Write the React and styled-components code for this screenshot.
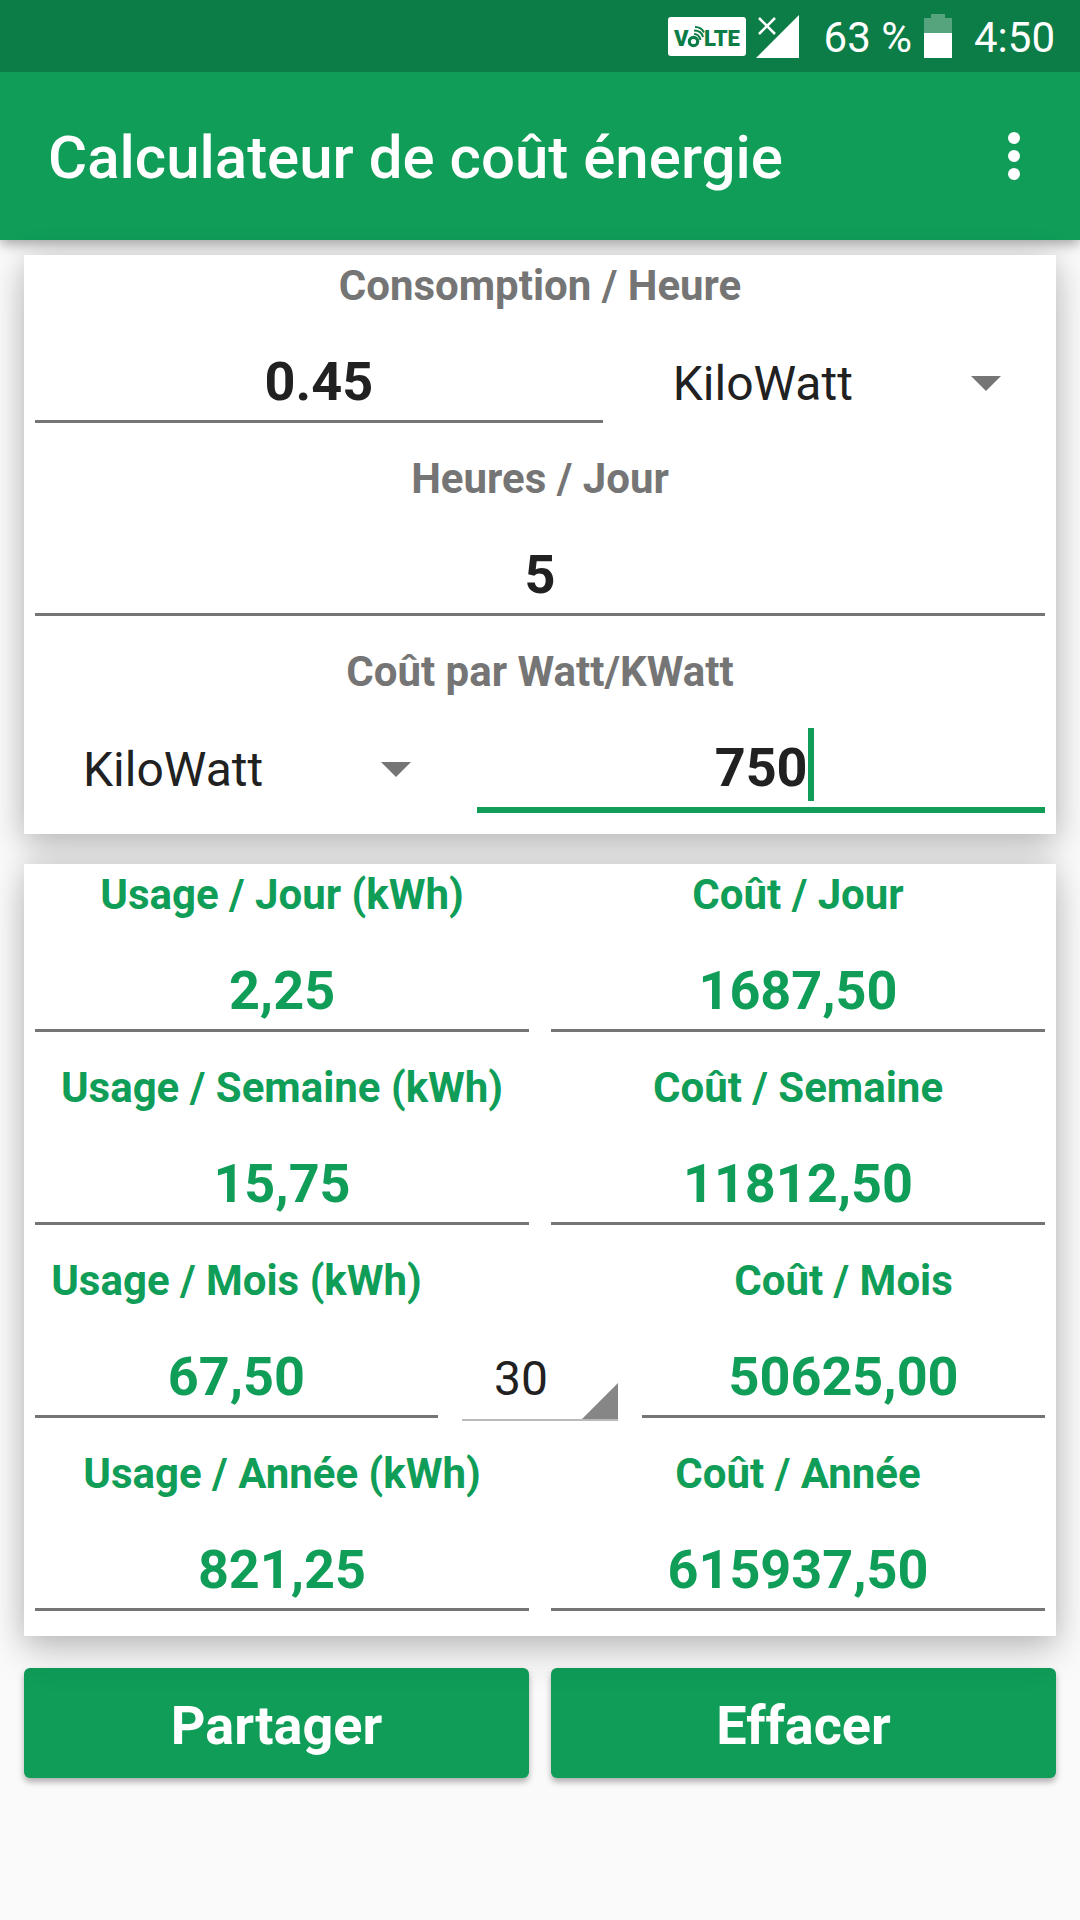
import React, { useState } from "react"
import styled, { createGlobalStyle } from "styled-components"

const Colors = {
  Green: "#0f9d58",
  DarkGreen: "#0c7d46",
  Grey: "#757575",
  Black: "#212121",
  Page: "#fafafa",
}

const format = n => n.toFixed(2).replace(".", ",")

const UnitSelect = ({ label, value, onChange }) => (
  <SelectWrap>
    <Select
      aria-label={label}
      value={value}
      onChange={e => onChange(e.target.value)}
    >
      <option>Watt</option>
      <option>KiloWatt</option>
    </Select>
    <Arrow viewBox="0 0 30 15" aria-hidden="true">
      <path d="M0 0h30L15 15z" />
    </Arrow>
  </SelectWrap>
)

const Result = ({ id, label, value }) => (
  <Cell>
    <Label htmlFor={id} $green>
      {label}
    </Label>
    <Input id={id} value={format(value)} readOnly $green />
  </Cell>
)

const App = () => {
  const [power, setPower] = useState("0.45")
  const [powerUnit, setPowerUnit] = useState("KiloWatt")
  const [hours, setHours] = useState("5")
  const [cost, setCost] = useState("750")
  const [costUnit, setCostUnit] = useState("KiloWatt")
  const [days, setDays] = useState("30")

  const kwh = (Number(power) * Number(hours)) / (powerUnit === "Watt" ? 1000 : 1)
  const price = kwh * Number(cost) * (costUnit === "Watt" ? 1000 : 1)

  const clear = () => {
    setPower("")
    setHours("")
    setCost("")
  }

  return (
    <>
      <GlobalStyle />
      <StatusBar>
        <Volte viewBox="0 0 78 39" role="img" aria-label="VoLTE">
          <rect width="78" height="39" rx="3" fill="#fff" />
          <g
            fill={Colors.DarkGreen}
            fontFamily="Roboto, sans-serif"
            fontSize="22"
            fontWeight="900"
          >
            <text x="6" y="29">V</text>
            <text x="36" y="29">LTE</text>
          </g>
          <g fill="none" stroke={Colors.DarkGreen}>
            <circle cx="25.500" cy="24.500" r="4.200" strokeWidth="3.200" />
            <path d="M26 17q5 0 6.500 6" strokeWidth="2" />
            <path d="M26 13.500q7.500 0 9 6.500" strokeWidth="2" />
            <path d="M27 10q6.500 0 9 5.500" strokeWidth="2" />
          </g>
        </Volte>
        <Signal viewBox="0 0 43 43" aria-hidden="true">
          <path d="M43 0v43H0z" fill="#fff" />
          <path d="M3 3l16 16M19 3L3 19" stroke="#fff" strokeWidth="2.500" />
        </Signal>
        <StatusText>63 %</StatusText>
        <Battery viewBox="0 0 28 44" aria-hidden="true">
          <path d="M7 0h14v4h7v15H0V4h7z" fill="#fff" fillOpacity=".3" />
          <path d="M0 19h28v25H0z" fill="#fff" />
        </Battery>
        <StatusText>4:50</StatusText>
      </StatusBar>
      <Header>
        <Title>Calculateur de coût énergie</Title>
        <MenuBtn aria-label="Menu">
          <svg width="12" height="48" viewBox="0 0 12 48" fill="#fff">
            <circle cx="6" cy="6" r="6" />
            <circle cx="6" cy="24" r="6" />
            <circle cx="6" cy="42" r="6" />
          </svg>
        </MenuBtn>
      </Header>
      <Main>
        <Card>
          <Label htmlFor="power">Consomption / Heure</Label>
          <Row $columns="4fr 3fr">
            <Input
              id="power"
              value={power}
              onChange={e => setPower(e.target.value)}
            />
            <UnitSelect
              label="Unité de consommation"
              value={powerUnit}
              onChange={setPowerUnit}
            />
          </Row>
          <Label htmlFor="hours">Heures / Jour</Label>
          <Row $columns="1fr">
            <Input
              id="hours"
              value={hours}
              onChange={e => setHours(e.target.value)}
            />
          </Row>
          <Label htmlFor="cost">Coût par Watt/KWatt</Label>
          <Row $columns="3fr 4fr">
            <UnitSelect
              label="Unité de coût"
              value={costUnit}
              onChange={setCostUnit}
            />
            <ActiveField>
              <Input
                id="cost"
                value={cost}
                onChange={e => setCost(e.target.value)}
                $active
              />
              <Caret style={{ left: `calc(50% + ${cost.length / 2}ch)` }} />
            </ActiveField>
          </Row>
        </Card>
        <Card>
          <Row $columns="1fr 1fr">
            <Result id="kwhDay" label="Usage / Jour (kWh)" value={kwh} />
            <Result id="costDay" label="Coût / Jour" value={price} />
            <Result id="kwhWeek" label="Usage / Semaine (kWh)" value={kwh * 7} />
            <Result id="costWeek" label="Coût / Semaine" value={price * 7} />
          </Row>
          <Row $columns="7fr 3fr 7fr">
            <Result id="kwhMonth" label="Usage / Mois (kWh)" value={kwh * days} />
            <DaysWrap>
              <DaysSelect
                aria-label="Jours par mois"
                value={days}
                onChange={e => setDays(e.target.value)}
              >
                <option>28</option>
                <option>29</option>
                <option>30</option>
                <option>31</option>
              </DaysSelect>
              <Corner viewBox="0 0 36 36" aria-hidden="true">
                <path d="M36 0v36H0z" />
              </Corner>
            </DaysWrap>
            <Result id="costMonth" label="Coût / Mois" value={price * days} />
          </Row>
          <Row $columns="1fr 1fr">
            <Result id="kwhYear" label="Usage / Année (kWh)" value={kwh * 365} />
            <Result id="costYear" label="Coût / Année" value={price * 365} />
          </Row>
        </Card>
        <Actions>
          <ActionBtn>Partager</ActionBtn>
          <ActionBtn onClick={clear}>Effacer</ActionBtn>
        </Actions>
      </Main>
    </>
  )
}

export default App

const GlobalStyle = createGlobalStyle`
  * {
    box-sizing: border-box;
  }
  body {
    margin: 0;
    background: ${Colors.Page};
    font-family: Roboto, sans-serif;
  }
  input, select, button {
    margin: 0;
    border: none;
    border-radius: 0;
    background: none;
    font-family: inherit;
    outline: none;
  }
`

const StatusBar = styled.div`
  position: relative;
  z-index: 1;
  display: flex;
  align-items: center;
  justify-content: flex-end;
  height: 72px;
  padding: 0 25px;
  background: ${Colors.DarkGreen};
  color: #fff;
`

const StatusText = styled.span`
  padding-top: 4px;
  font-size: 42px;
  line-height: 48px;
`

const Volte = styled.svg`
  width: 78px;
  height: 39px;
  margin-right: 10px;
`

const Signal = styled.svg`
  width: 43px;
  height: 43px;
  margin-right: 25px;
`

const Battery = styled.svg`
  width: 28px;
  height: 44px;
  margin: 0 22px 0 12px;
`

const Header = styled.header`
  display: flex;
  align-items: center;
  justify-content: space-between;
  height: 168px;
  padding: 0 48px;
  background: ${Colors.Green};
  box-shadow: 0 4px 12px rgba(0, 0, 0, 0.35);
`

const Title = styled.h1`
  margin: 0;
  padding-top: 4px;
  color: #fff;
  font-size: 60px;
  font-weight: 500;
  line-height: 72px;
`

const MenuBtn = styled.button`
  display: flex;
  padding: 12px;
  cursor: pointer;
`

const Main = styled.main`
  display: grid;
  gap: 30px;
  padding: 15px 24px;
`

/* sits over the buttons so its shadow falls on them */
const Card = styled.section`
  position: relative;
  z-index: 1;
  background: #fff;
  box-shadow: 0 20px 36px rgba(0, 0, 0, 0.14), 0 2px 28px rgba(0, 0, 0, 0.18);
`

const Row = styled.div`
  display: grid;
  grid-template-columns: ${props => props.$columns};
`

const Cell = styled.div`
  min-width: 0;
`

const Label = styled.label`
  display: block;
  padding: 6px 0 2px;
  color: ${props => (props.$green ? Colors.Green : Colors.Grey)};
  font-size: 42px;
  font-weight: 700;
  line-height: 49px;
  text-align: center;
  white-space: nowrap;
`

const Input = styled.input`
  display: block;
  width: calc(100% - 22px);
  height: ${props => (props.$active ? "115px" : "111px")};
  margin: 0 11px ${props => (props.$active ? "21px" : "25px")};
  padding: 37px 0 ${props => (props.$active ? "8px" : "7px")};
  border-bottom: ${props =>
    props.$active ? `6px solid ${Colors.Green}` : `3px solid ${Colors.Grey}`};
  color: ${props => (props.$green ? Colors.Green : Colors.Black)};
  font-size: 54px;
  font-weight: 700;
  line-height: 64px;
  text-align: center;
  caret-color: ${props => (props.$active ? "transparent" : Colors.Green)};
`

const ActiveField = styled.div`
  position: relative;
  font-size: 54px;
  font-weight: 700;
`

const Caret = styled.span`
  position: absolute;
  top: 30px;
  width: 6px;
  height: 73px;
  background: ${Colors.Green};
`

const SelectWrap = styled.div`
  display: grid;
  align-items: start;
`

const Select = styled.select`
  grid-area: 1 / 1;
  width: 100%;
  padding: 44px 90px 12px 59px;
  appearance: none;
  color: ${Colors.Black};
  font-size: 48px;
  line-height: 56px;
`

const Arrow = styled.svg`
  grid-area: 1 / 1;
  justify-self: end;
  width: 30px;
  height: 15px;
  margin: 64px 55px 0 0;
  fill: ${Colors.Grey};
  pointer-events: none;
`

const DaysWrap = styled.div`
  display: grid;
  align-self: end;
  margin: 0 13px 22px;
  border-bottom: 2px solid #bababa;
`

const DaysSelect = styled(Select)`
  padding: 44px 36px 12px 32px;
`

const Corner = styled.svg`
  grid-area: 1 / 1;
  align-self: end;
  justify-self: end;
  width: 36px;
  height: 36px;
  fill: #868686;
  pointer-events: none;
`

const Actions = styled.div`
  display: grid;
  grid-template-columns: 1fr 1fr;
  gap: 22px;
  padding-top: 2px;
`

const ActionBtn = styled.button`
  height: 110px;
  padding: 4px 0 0;
  border-radius: 6px;
  background: ${Colors.Green};
  box-shadow: 0 4px 6px rgba(0, 0, 0, 0.3);
  color: #fff;
  font-size: 54px;
  font-weight: 700;
  cursor: pointer;
`
